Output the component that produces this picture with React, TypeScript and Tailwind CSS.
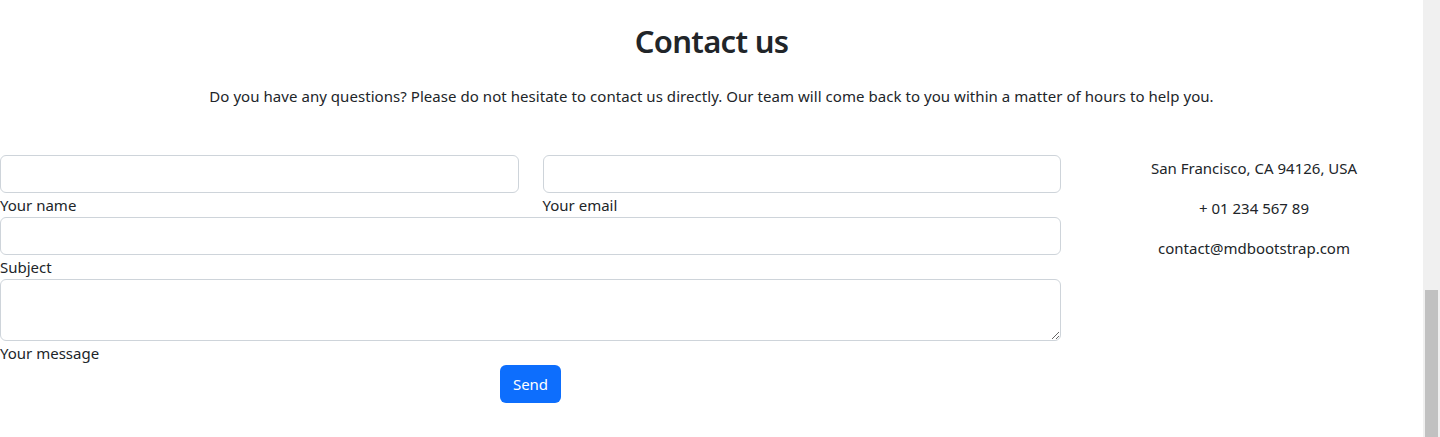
import React from "react";

export default function App() {
  return (
    <div
      className="flex h-[437px] w-[1440px] overflow-hidden bg-white text-[#212529]"
      style={{ fontFamily: '"Noto Sans", "Open Sans", sans-serif' }}
    >
      <div className="w-[1423px] shrink-0">
        <h2 className="mt-[22px] text-center text-[31px] font-semibold leading-[38px] tracking-[-0.7px]">Contact us</h2>
        <p className="mt-[24px] text-center text-[15px] leading-[24px] tracking-[0.05px]">
          Do you have any questions? Please do not hesitate to contact us directly. Our team will come back to you within a matter of hours to help you.
        </p>
        <div className="mt-[47px] flex">
          <form className="w-[1061px] shrink-0 text-[15px] leading-[24px]">
            <div className="grid grid-cols-2 gap-x-[24px]">
              <div>
                <input className="block h-[38px] w-full rounded-[6px] border border-[#ced4da] bg-white" />
                <label className="block">Your name</label>
              </div>
              <div>
                <input className="block h-[38px] w-full rounded-[6px] border border-[#ced4da] bg-white" />
                <label className="block">Your email</label>
              </div>
            </div>
            <input className="block h-[38px] w-full rounded-[6px] border border-[#ced4da] bg-white" />
            <label className="block">Subject</label>
            <textarea rows={2} className="block h-[62px] w-full rounded-[6px] border border-[#ced4da] bg-white" />
            <label className="block">Your message</label>
            <div className="flex justify-center">
              <button
                type="button"
                className="h-[38px] rounded-[6px] bg-[#0d6efd] px-[13px] pb-[1px] text-[15px] text-white"
              >
                Send
              </button>
            </div>
          </form>
          <div className="ml-[24px] flex flex-1 flex-col items-center pt-[1px] text-[15px] leading-[24px]">
            <p className="mb-[16px]">San Francisco, CA 94126, USA</p>
            <p className="mb-[16px]">+ 01 234 567 89</p>
            <p>contact@mdbootstrap.com</p>
          </div>
        </div>
      </div>
      <div className="flex w-[17px] shrink-0 flex-col bg-[#f0f0f0] pl-[2px] pr-[2px] pt-[290px]">
        <div className="flex-1 bg-[#c1c1c1]" />
      </div>
    </div>
  );
}
